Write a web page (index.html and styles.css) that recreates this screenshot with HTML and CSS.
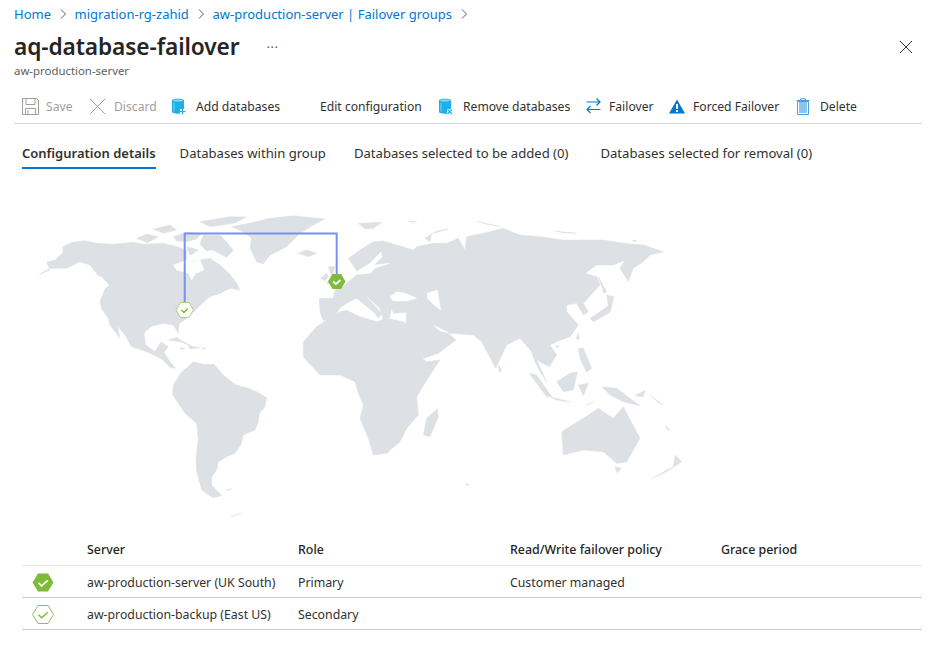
FILE: index.html
```html
<!DOCTYPE html>
<html lang="en">
<head>
<meta charset="utf-8">
<title>aq-database-failover</title>
<link rel="stylesheet" href="styles.css">
</head>
<body>
<div class="page">
  <nav class="crumbs">
    <a>Home</a><svg class="chev" viewBox="0 0 8 12"><path d="M2 1.5 6.5 6 2 10.5"/></svg>
    <a>migration-rg-zahid</a><svg class="chev" viewBox="0 0 8 12"><path d="M2 1.5 6.5 6 2 10.5"/></svg>
    <a>aw-production-server | Failover groups</a><svg class="chev" viewBox="0 0 8 12"><path d="M2 1.5 6.5 6 2 10.5"/></svg>
  </nav>
  <header class="head">
    <div class="titles">
      <div class="title-row"><h1>aq-database-failover</h1><span class="more">···</span></div>
      <div class="sub">aw-production-server</div>
    </div>
    <svg class="close" viewBox="0 0 14 14"><path d="M1 1 13 13M13 1 1 13"/></svg>
  </header>
  <div class="toolbar">
    <div class="tool off w-save"><svg viewBox="0 0 17 17"><path class="ln" d="M.5.5h14l2 2v14H.5zM4 .5v6h9v-6M3.5 16.5v-6h10v6M6 12v4.5"/></svg><span>Save</span></div>
    <div class="tool off w-discard"><svg viewBox="0 0 17 17"><path class="ln" d="M1 1 16 16M16 1 1 16"/></svg><span>Discard</span></div>
    <div class="tool w-add"><svg class="db" viewBox="0 0 14 17"><path class="cyl" d="M0 2.5C0 .2 12 .2 12 2.5V11H8v4.800C4 15.800 0 15.200 0 14z"/><ellipse class="cap" cx="6" cy="2.600" rx="4.800" ry="1"/><path class="shade" d="M2 5v8.500"/><path class="mark" d="M10.500 10.500v6M7.500 13.500h6"/></svg><span>Add databases</span></div>
    <div class="tool w-edit"><span>Edit configuration</span></div>
    <div class="tool w-remove"><svg class="db" viewBox="0 0 14 17"><path class="cyl" d="M0 2.5C0 .2 12 .2 12 2.5V11H8v4.800C4 15.800 0 15.200 0 14z"/><ellipse class="cap" cx="6" cy="2.600" rx="4.800" ry="1"/><path class="shade" d="M2 5v8.500"/><path class="mark" d="M8.500 11.500 13 16M13 11.500 8.500 16"/></svg><span>Remove databases</span></div>
    <div class="tool w-fail"><svg class="swap" viewBox="0 0 15 17"><path d="M.5 4H14M10.500.5 14 4 10.500 7.500M14.500 11.500H1M4.500 8 1 11.500 4.500 15"/></svg><span>Failover</span></div>
    <div class="tool w-forced"><svg class="warn" viewBox="0 0 16 15"><path class="tri" d="M8 .5 16 14.500H0z"/><path class="bang" d="M7 5h2v5H7zM7 11h2v2H7z"/></svg><span>Forced Failover</span></div>
    <div class="tool w-del"><svg class="trash" viewBox="0 0 14 17"><path class="body" d="M3 4h8v11H3z"/><path class="edge" d="M1.500 3.500h11v13h-11zM.5 2.500h13M4.500 2.500V.8h5v1.700"/></svg><span>Delete</span></div>
  </div>
  <div class="tabs">
    <div class="tab active">Configuration details</div>
    <div class="tab">Databases within group</div>
    <div class="tab">Databases selected to be added (0)</div>
    <div class="tab">Databases selected for removal (0)</div>
  </div>
  <svg class="map" viewBox="14 169 908 360">
    <g transform="translate(30 205) scale(.33333)" class="land">
      <path d="M28 208 60 195 50 172 75 165 100 142 98 125 125 112 165 107 200 115 250 118 310 112 340 118 400 115 440 125 470 135 470 165 495 170 510 165 540 160 570 180 600 208 620 235 630 255 600 250 572 260 540 275 520 292 500 312 470 340 447 357 445 385 430 360 400 355 362 365 342 385 347 420 375 440 393 410 415 425 402 442 420 470 437 490 420 487 395 462 350 440 305 425 285 390 262 362 270 400 240 360 235 340 215 312 210 290 225 252 238 240 215 215 205 212 180 180 150 170 130 180 110 190 60 190Z"/>
      <path class="sea" d="M430 180 470 165 495 172 510 165 522 195 497 205 485 225 475 205 440 195Z"/>
      <path d="M320 100 350 88 385 95 352 113ZM370 72 420 60 440 75 400 85ZM430 95 470 82 515 85 500 102 470 110 440 108ZM510 50 600 35 650 36 612 55 540 65ZM520 90 572 92 590 112 610 135 590 157 548 135 530 138 510 118ZM470 125 505 135 480 152ZM540 270 590 240 615 232 600 250 560 270Z"/>
      <path d="M605 65 660 55 720 40 790 32 885 42 850 60 810 85 770 125 720 150 700 176 680 170 660 130 665 100 640 80ZM805 145 830 135 860 145 835 155ZM415 405 440 398 482 422 450 410ZM475 422 510 428 480 432ZM450 428 465 430 455 434ZM515 428 528 430 520 432ZM600 852 588 856 606 852ZM602 935 632 924 615 932Z"/>
      <path d="M430 540 452 505 490 470 520 478 552 478 580 510 618 540 650 548 680 560 710 578 705 605 688 625 685 650 675 675 640 690 632 720 615 745 590 755 565 770 560 795 545 815 545 840 575 872 548 878 515 855 500 800 498 760 505 700 500 655 465 625 445 595 428 570Z"/>
    </g>
    <g transform="translate(350 205) scale(.33333)" class="land">
      <path d="M-5 160 30 135 70 110 100 108 140 120 190 135 200 125 250 115 290 115 325 100 345 135 350 95 400 85 460 70 510 90 570 95 640 105 700 105 760 105 820 115 880 120 940 140 900 150 880 170 850 190 835 230 810 190 825 165 790 180 740 180 705 205 740 215 750 240 700 295 715 320 700 330 680 295 650 300 650 320 685 360 660 395 620 410 600 420 620 450 598 485 560 465 590 530 570 500 555 470 545 440 510 400 470 420 437 490 395 410 370 390 300 385 255 360 295 385 318 405 265 445 222 460 170 375 168 355 170 322 130 325 125 310 118 340 100 345 90 310 40 265 95 325 85 340 75 325 45 300 20 280 -5 292 -30 308 -45 335 -80 348 -90 320 -92 280 -50 280 -45 255 -15 240 25 205Z"/>
      <path d="M168 358 220 462 228 470 270 465 240 510 200 575 205 630 170 670 150 710 110 745 70 750 55 700 30 640 40 600 25 565 15 530 -30 510 -90 510 -140 455 -140 410 -100 365 -60 340 -30 320 -10 316 30 335 80 350 110 340 160 350Z"/>
      <path class="sea" d="M20 200 60 175 92 142 97 155 72 180 120 175 75 190 60 205 20 208ZM120 275 140 260 165 265 200 280 170 288 130 288ZM232 265 262 255 268 290 272 315 250 298 232 280ZM250 360 295 383 270 378Z"/>
      <path d="M25 55 95 52 70 70 45 72ZM175 48 200 50 185 52ZM225 100 260 78 295 72 245 86 240 110ZM380 48 450 65 410 58ZM615 78 680 85 640 84ZM848 105 862 108 850 110ZM745 215 770 260 762 265ZM720 340 750 320 775 302 770 270 792 275 780 322 730 350ZM678 400 685 385 688 405ZM685 430 700 430 725 490 710 502 690 460ZM620 530 660 505 682 500 670 555 640 560ZM538 505 560 510 605 575 590 575ZM600 575 660 590 620 586ZM685 540 715 535 700 572ZM755 545 800 550 870 602 820 590 780 570ZM855 572 885 556 880 575ZM635 680 700 640 745 610 790 640 820 605 870 700 830 770 800 775 760 740 700 735 640 750ZM795 785 815 790 800 803ZM905 820 970 785 975 750 995 770 950 800ZM220 690 230 640 262 612 265 635 240 695ZM445 480 455 495 448 503ZM620 420 628 425 618 428ZM348 836 358 838 350 842ZM900 570 940 600 925 592ZM945 662 960 675 950 672ZM710 600 730 590 710 602Z"/>
    </g>
    <g transform="translate(290 215) scale(.33333)" class="land">
      <path d="M115 155 135 155 130 175 145 190 130 206 110 206 125 185ZM92 190 110 175 115 186 105 197Z"/>
    </g>
    <path class="link" d="M184.700 305V233.500H336.700V276"/>
    <path class="hex-f" d="M332.500 274h8.500l4.500 7.500-4.500 7.500h-8.500l-4.500-7.500z"/>
    <path class="tick" d="M333 281.500l3 2.500 4.500-4"/>
    <path class="hex-o" d="M180.500 302.500h8.500l4.500 7.500-4.500 7.500h-8.500l-4.500-7.500z"/>
    <path class="tick-g" d="M181.500 310l2.500 2.500 4-4"/>
  </svg>
  <div class="grid">
    <div class="row hdr"><div></div><div>Server</div><div>Role</div><div>Read/Write failover policy</div><div>Grace period</div></div>
    <div class="row">
      <div class="ic"><svg viewBox="0 0 22 19"><path class="hex-f" d="M6 .5h10l5.500 9-5.500 9H6l-5.500-9z"/><path class="tick" d="M6.500 9.800l3.200 3 6-5.500"/></svg></div>
      <div>aw-production-server (UK South)</div><div>Primary</div><div>Customer managed</div><div></div>
    </div>
    <div class="row">
      <div class="ic"><svg viewBox="0 0 22 19"><path class="hex-l" d="M6 .5h10l5.500 9-5.500 9H6l-5.500-9z"/><path class="tick-g" d="M6.500 9.800l3.200 3 6-5.500"/></svg></div>
      <div>aw-production-backup (East US)</div><div>Secondary</div><div></div><div></div>
    </div>
  </div>
</div>
</body>
</html>
```
FILE: styles.css
```css
* { box-sizing: border-box; }
html, body { margin: 0; background: #fff; }
body {
  width: 936px;
  height: 664px;
  overflow: hidden;
  font-family: "Noto Sans", "Open Sans", sans-serif;
  font-size: 12.300px;
  color: #323130;
}
.page { padding: 0 14px; }
.crumbs {
  display: flex;
  align-items: center;
  height: 28px;
  color: #0078d4;
  font-size: 13px;
}
.chev { width: 8px; height: 12px; margin: 0 7.800px; fill: none; stroke: #605e5c; stroke-width: 1; }
.head { display: flex; justify-content: space-between; height: 52px; }
.title-row { display: flex; align-items: center; height: 37px; }
h1 {
  margin: 0;
  font-size: 22.700px;
  font-weight: 600;
  color: #252423;
  letter-spacing: -.1px;
}
.more { margin-left: 27px; font-size: 13px; color: #605e5c; letter-spacing: .5px; }
.sub { font-size: 11.400px; color: #605e5c; line-height: 12px; }
.close { width: 14px; height: 14px; margin: 12px 9px 0 0; fill: none; stroke: #323130; stroke-width: 1; }
.toolbar {
  display: flex;
  align-items: center;
  height: 44px;
  padding: 10px 0 0 8px;
  border-bottom: 1px solid #d6d6d6;
  font-size: 12.150px;
}
.tool { display: flex; align-items: center; flex: none; white-space: nowrap; }
.tool svg { height: 17px; width: 17px; flex: none; }
.tool.off { color: #a19f9d; }
.w-save { width: 67px; gap: 7px; }
.w-discard { width: 83px; gap: 8px; }
.w-add { width: 148px; gap: 10px; }
.w-add svg, .w-remove svg { width: 14px; }
.w-edit { width: 119px; }
.w-remove { width: 147px; gap: 10px; }
.w-fail { width: 83px; gap: 8px; }
.w-fail svg { width: 15px; }
.w-forced { width: 127px; gap: 8px; }
.w-forced svg { width: 16px; height: 15px; }
.w-del { gap: 10px; }
.w-del svg { width: 14px; }
.ln { fill: none; stroke: #a19f9d; stroke-width: 1; }
.cyl { fill: #1fb0ea; }
.cap { fill: #8fd8f5; }
.shade { fill: none; stroke: #5ac8f2; stroke-width: 1.500; }
.mark { fill: none; stroke: #1fb0ea; stroke-width: 1.200; }
.swap path { fill: none; stroke: #0078d4; stroke-width: 1.200; }
.tri { fill: #0078d4; }
.bang { fill: #fff; }
.body { fill: #8cc4ec; }
.edge { fill: none; stroke: #4a9fe0; stroke-width: 1; }
.tabs {
  display: flex;
  height: 45px;
  padding-left: 8px;
  gap: 24px;
}
.tab {
  display: flex;
  align-items: center;
  height: 45px;
  padding-top: 14px;
  border-bottom: 2px solid transparent;
  white-space: nowrap;
  font-size: 13.100px;
}
.tab:nth-child(3) { margin-left: 4px; }
.tab:nth-child(4) { margin-left: 8px; }
.tab.active { font-size: 13px; font-weight: 600; border-bottom-color: #0078d4; }
.map { display: block; width: 908px; height: 360px; }
.land { fill: #dde0e4; stroke: #dde0e4; stroke-width: 1.500; stroke-linejoin: round; }
.land .sea { fill: #fff; stroke: #fff; }
.link { fill: none; stroke: #7a90f0; stroke-width: 2; }
.hex-f { fill: #7fba38; }
.hex-o { fill: #fff; stroke: #a9d07c; stroke-width: 1; }
.hex-l { fill: #fff; stroke: #8cc257; stroke-width: 1; }
.tick { fill: none; stroke: #fff; stroke-width: 1.800; }
.tick-g { fill: none; stroke: #7fba38; stroke-width: 1.500; }
.grid { margin: 5px 0 0 8px; }
.row {
  display: grid;
  grid-template-columns: 65px 211px 212px 211px 201px;
  align-items: center;
  height: 32px;
  padding-top: 1px;
  border-bottom: 1px solid #cbcbcb;
}
.row.hdr { padding-top: 0; font-weight: 500; font-size: 12.400px; border-bottom-color: #e8e8e8; color: #252423; }
.ic { display: flex; padding-left: 10px; }
.ic svg { width: 22px; height: 19px; }
```
